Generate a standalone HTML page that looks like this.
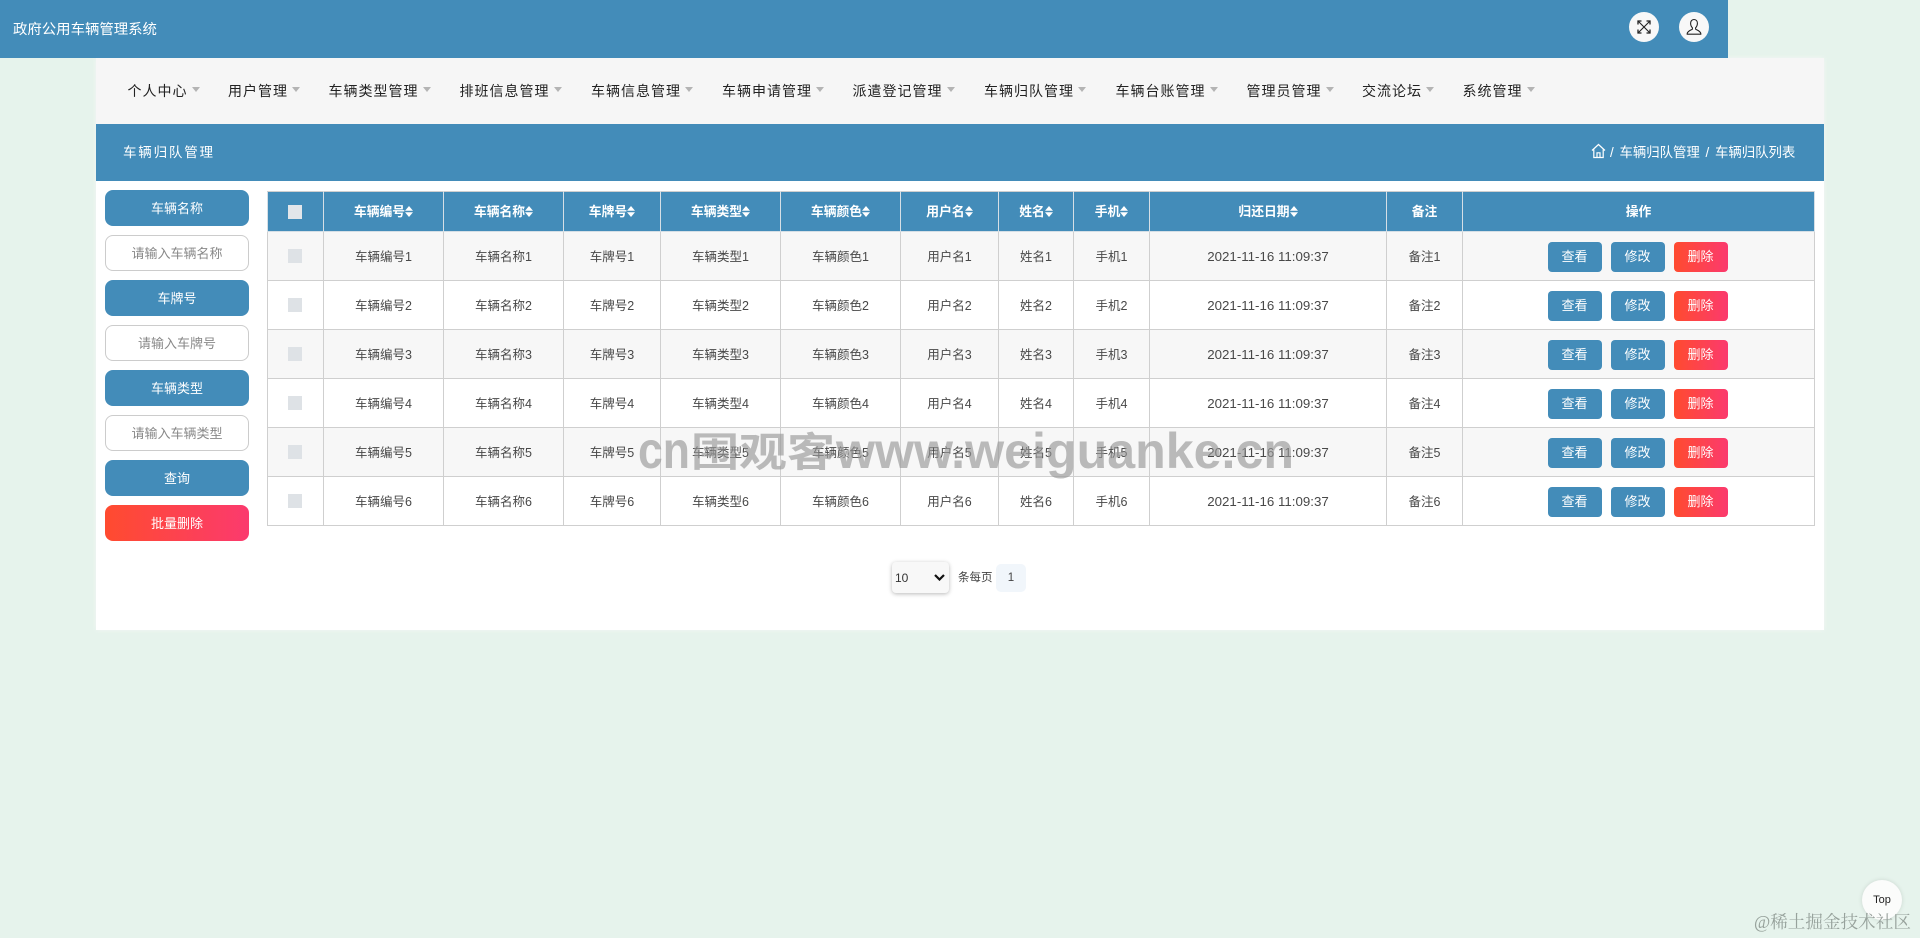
<!DOCTYPE html>
<html lang="zh-CN">
<head>
<meta charset="utf-8">
<title>政府公用车辆管理系统</title>
<style>
*{box-sizing:border-box;margin:0;padding:0}
html,body{width:1920px;height:938px;overflow:hidden}
body{position:relative;background:#e6f3ec;font-family:"Liberation Sans","Noto Sans CJK SC",sans-serif;color:#444}
.abs{position:absolute;white-space:nowrap}
#top{position:absolute;left:0;top:0;width:1728px;height:58px;background:#438cb9;z-index:2}
#top .t{position:absolute;left:13px;top:19px;font-size:14.4px;line-height:22px;color:#fff}
.circ{position:absolute;top:12px;width:30px;height:30px;border-radius:50%;background:#f8f8f8}
.circ svg{position:absolute;left:5px;top:5px}
#panel{position:absolute;left:96px;top:58px;width:1728px;height:572px;background:#fff;box-shadow:0 0 4px #f3f6f4}
#nav{position:absolute;left:0;top:0;width:1728px;height:66px;background:#f6f6f6}
.nv{position:absolute;top:22px;font-size:14px;line-height:22px;letter-spacing:1px;color:#222;white-space:nowrap}
.nv i{position:absolute;top:7px;right:-12px;width:0;height:0;border-left:4.500px solid transparent;border-right:4.500px solid transparent;border-top:5px solid #b4b4b4}
#band{position:absolute;left:0;top:66px;width:1728px;height:57px;background:#438cb9;color:#fff}
#band .h{position:absolute;left:27px;top:18px;font-size:13.5px;line-height:22px;letter-spacing:1.800px}
#band .c{position:absolute;left:1514px;top:18px;font-size:13.4px;line-height:22px;word-spacing:2px;white-space:nowrap}
.sb{position:absolute;left:105px;width:144px;height:36px;border-radius:8px;background:#438cb9;color:#fff;font-size:13px;line-height:37px;text-align:center}
.in{position:absolute;left:105px;width:144px;height:36px;border-radius:8px;background:#fff;border:1px solid #ccc;font-size:13px;text-align:center;font-family:inherit;outline:none}
.in::placeholder{color:#888;opacity:1}
.sb.red{background:linear-gradient(90deg,#ff4b2f,#fb3a6e)}
table{position:absolute;left:267px;top:191px;width:1547px;table-layout:fixed;border-collapse:collapse;font-size:12.5px;z-index:1}
th,td{border:1px solid #cfcfcf;text-align:center;vertical-align:middle;padding:0}
th{height:40px;background:#438cb9;color:#fff;font-weight:700;border-color:#d5dfe6;border-top-color:#cfcfcf;padding-bottom:2px;font-size:12.800px}
td{height:49px;color:#484848;padding-bottom:2px}
td.d,td.o,td.k,th.k{padding-bottom:0}
tbody tr:nth-child(odd) td{background:#f7f7f7}
th svg{vertical-align:-1px;margin-left:0}
.cb{display:block;width:14px;height:14px;margin:0 auto;background:#dee2e6}
th .cb{background:#e3e6ea;position:relative;left:-1px}
td .cb{position:relative;left:-1px}
.d{font-size:13.3px}
.b{display:inline-block;width:54px;height:30px;line-height:29px;border-radius:4px;background:#438cb9;color:#fff;font-size:13px;margin:0 4.5px;vertical-align:middle}
.b.red{background:linear-gradient(90deg,#ff4b2f,#fb3a6e)}
td.o .w{position:relative;left:-1px;white-space:nowrap;display:block;margin-top:2px}
#sel{position:absolute;left:892px;top:562px;width:57px;height:31px;border:none;appearance:none;-webkit-appearance:none;background:#f8f8f8;border-radius:4px;box-shadow:0 1px 4px rgba(0,0,0,.28);font-size:12px;font-family:inherit;color:#333;padding-left:3px}
#pg{position:absolute;left:996px;top:564px;width:30px;height:28px;background:#f1f6fb;border-radius:5px;font-size:11.5px;line-height:28px;text-align:center;color:#444}
#wm{position:absolute;left:0;top:0;width:1920px;height:938px;z-index:5;pointer-events:none}
#topb{position:absolute;left:1862px;top:880px;width:40px;height:40px;border-radius:50%;background:#fbfcfb;box-shadow:0 0 5px rgba(0,0,0,.12);font-size:11px;line-height:40px;text-align:center;color:#222;z-index:3}
#jj{position:absolute;left:1754px;top:909px;font-family:"Liberation Serif","Noto Serif CJK SC",serif;font-size:17.6px;line-height:26px;color:rgba(120,130,125,.72);white-space:nowrap;z-index:4}
</style>
</head>
<body>
<div id="top">
  <div class="t">政府公用车辆管理系统</div>
  <div class="circ" style="left:1629px">
    <svg width="20" height="20" viewBox="0 0 20 20" fill="none" stroke="#222" stroke-width="1.1"><path d="M4 4L16 16M16 4L4 16"/><path d="M4 7.500V4H7.500M12.500 4H16V7.500M16 12.500V16H12.500M7.500 16H4V12.500" stroke-width="1.300"/></svg>
  </div>
  <div class="circ" style="left:1679px">
    <svg width="20" height="20" viewBox="0 0 20 20" fill="none" stroke="#222" stroke-width="1.1"><path d="M10 2.500C7.800 2.500 6.600 4.200 6.600 6.300C6.600 8.400 7.600 10 8.400 10.800V12.200C6.800 13.200 3.800 14 3.200 16.500V17.200H16.800V16.500C16.200 14 13.200 13.200 11.600 12.200V10.800C12.400 10 13.400 8.400 13.400 6.300C13.400 4.200 12.200 2.500 10 2.500Z"/></svg>
  </div>
</div>
<div id="panel">
  <div id="nav">
    <div class="nv" style="left:31.500px">个人中心<i></i></div>
    <div class="nv" style="left:132px">用户管理<i></i></div>
    <div class="nv" style="left:232.500px">车辆类型管理<i></i></div>
    <div class="nv" style="left:363.500px">排班信息管理<i></i></div>
    <div class="nv" style="left:495px">车辆信息管理<i></i></div>
    <div class="nv" style="left:626px">车辆申请管理<i></i></div>
    <div class="nv" style="left:756.500px">派遣登记管理<i></i></div>
    <div class="nv" style="left:888px">车辆归队管理<i></i></div>
    <div class="nv" style="left:1019.500px">车辆台账管理<i></i></div>
    <div class="nv" style="left:1150.500px">管理员管理<i></i></div>
    <div class="nv" style="left:1266px">交流论坛<i></i></div>
    <div class="nv" style="left:1366.500px">系统管理<i></i></div>
  </div>
  <div id="band">
    <div class="h">车辆归队管理</div>
    <svg class="abs" style="left:1495px;top:19px" width="15" height="16" viewBox="0 0 15 16" fill="none" stroke="#fff" stroke-width="1.2"><path d="M1 7.500L7.500 1.500L14 7.500M2.800 6.500V14.500H12.200V6.500M6 14.500V9.800H9V14.500"/></svg>
    <div class="c">/ 车辆归队管理 / 车辆归队列表</div>
  </div>
</div>

<div class="sb" style="top:190px">车辆名称</div>
<input class="in" style="top:235px" placeholder="请输入车辆名称">
<div class="sb" style="top:280px">车牌号</div>
<input class="in" style="top:325px" placeholder="请输入车牌号">
<div class="sb" style="top:370px">车辆类型</div>
<input class="in" style="top:415px" placeholder="请输入车辆类型">
<div class="sb" style="top:460px">查询</div>
<div class="sb red" style="top:505px">批量删除</div>

<table>
<colgroup><col style="width:56px"><col style="width:120px"><col style="width:120px"><col style="width:97px"><col style="width:120px"><col style="width:120px"><col style="width:98px"><col style="width:75px"><col style="width:76px"><col style="width:237px"><col style="width:76px"><col style="width:352px"></colgroup>
<thead><tr>
<th class="k"><span class="cb"></span></th>
<th>车辆编号<svg width="8" height="11" viewBox="0 0 8 11" fill="#fff"><path d="M4 0L8 4.700H0ZM0 6.300H8L4 11Z"/></svg></th>
<th>车辆名称<svg width="8" height="11" viewBox="0 0 8 11" fill="#fff"><path d="M4 0L8 4.700H0ZM0 6.300H8L4 11Z"/></svg></th>
<th>车牌号<svg width="8" height="11" viewBox="0 0 8 11" fill="#fff"><path d="M4 0L8 4.700H0ZM0 6.300H8L4 11Z"/></svg></th>
<th>车辆类型<svg width="8" height="11" viewBox="0 0 8 11" fill="#fff"><path d="M4 0L8 4.700H0ZM0 6.300H8L4 11Z"/></svg></th>
<th>车辆颜色<svg width="8" height="11" viewBox="0 0 8 11" fill="#fff"><path d="M4 0L8 4.700H0ZM0 6.300H8L4 11Z"/></svg></th>
<th>用户名<svg width="8" height="11" viewBox="0 0 8 11" fill="#fff"><path d="M4 0L8 4.700H0ZM0 6.300H8L4 11Z"/></svg></th>
<th>姓名<svg width="8" height="11" viewBox="0 0 8 11" fill="#fff"><path d="M4 0L8 4.700H0ZM0 6.300H8L4 11Z"/></svg></th>
<th>手机<svg width="8" height="11" viewBox="0 0 8 11" fill="#fff"><path d="M4 0L8 4.700H0ZM0 6.300H8L4 11Z"/></svg></th>
<th>归还日期<svg width="8" height="11" viewBox="0 0 8 11" fill="#fff"><path d="M4 0L8 4.700H0ZM0 6.300H8L4 11Z"/></svg></th>
<th>备注</th>
<th>操作</th>
</tr></thead>
<tbody>
<tr><td class="k"><span class="cb"></span></td><td>车辆编号1</td><td>车辆名称1</td><td>车牌号1</td><td>车辆类型1</td><td>车辆颜色1</td><td>用户名1</td><td>姓名1</td><td>手机1</td><td class="d">2021-11-16 11:09:37</td><td>备注1</td><td class="o"><span class="w"><span class="b">查看</span><span class="b">修改</span><span class="b red">删除</span></span></td></tr>
<tr><td class="k"><span class="cb"></span></td><td>车辆编号2</td><td>车辆名称2</td><td>车牌号2</td><td>车辆类型2</td><td>车辆颜色2</td><td>用户名2</td><td>姓名2</td><td>手机2</td><td class="d">2021-11-16 11:09:37</td><td>备注2</td><td class="o"><span class="w"><span class="b">查看</span><span class="b">修改</span><span class="b red">删除</span></span></td></tr>
<tr><td class="k"><span class="cb"></span></td><td>车辆编号3</td><td>车辆名称3</td><td>车牌号3</td><td>车辆类型3</td><td>车辆颜色3</td><td>用户名3</td><td>姓名3</td><td>手机3</td><td class="d">2021-11-16 11:09:37</td><td>备注3</td><td class="o"><span class="w"><span class="b">查看</span><span class="b">修改</span><span class="b red">删除</span></span></td></tr>
<tr><td class="k"><span class="cb"></span></td><td>车辆编号4</td><td>车辆名称4</td><td>车牌号4</td><td>车辆类型4</td><td>车辆颜色4</td><td>用户名4</td><td>姓名4</td><td>手机4</td><td class="d">2021-11-16 11:09:37</td><td>备注4</td><td class="o"><span class="w"><span class="b">查看</span><span class="b">修改</span><span class="b red">删除</span></span></td></tr>
<tr><td class="k"><span class="cb"></span></td><td>车辆编号5</td><td>车辆名称5</td><td>车牌号5</td><td>车辆类型5</td><td>车辆颜色5</td><td>用户名5</td><td>姓名5</td><td>手机5</td><td class="d">2021-11-16 11:09:37</td><td>备注5</td><td class="o"><span class="w"><span class="b">查看</span><span class="b">修改</span><span class="b red">删除</span></span></td></tr>
<tr><td class="k"><span class="cb"></span></td><td>车辆编号6</td><td>车辆名称6</td><td>车牌号6</td><td>车辆类型6</td><td>车辆颜色6</td><td>用户名6</td><td>姓名6</td><td>手机6</td><td class="d">2021-11-16 11:09:37</td><td>备注6</td><td class="o"><span class="w"><span class="b">查看</span><span class="b">修改</span><span class="b red">删除</span></span></td></tr>
</tbody>
</table>

<select id="sel"><option>10</option></select>
<svg class="abs" style="left:934px;top:574px" width="11" height="7" viewBox="0 0 11 7" fill="none" stroke="#111" stroke-width="2.2"><path d="M1 1L5.500 5.500L10 1"/></svg>
<div class="abs" style="left:958px;top:568px;font-size:11.5px;line-height:20px;color:#444">条每页</div>
<div id="pg">1</div>

<svg id="wm" width="1920" height="938" viewBox="0 0 1920 938">
  <g fill="rgba(150,150,150,.64)" font-weight="700">
    <text x="638" y="468" font-size="52" textLength="52" lengthAdjust="spacingAndGlyphs" font-family="Liberation Sans, sans-serif">cn</text>
    <text x="691" y="466" font-size="40" textLength="144" lengthAdjust="spacingAndGlyphs" font-family="Noto Sans CJK SC, sans-serif">围观客</text>
    <text x="836" y="468" font-size="50" textLength="458" lengthAdjust="spacingAndGlyphs" font-family="Liberation Sans, sans-serif">www.weiguanke.cn</text>
  </g>
</svg>

<div id="topb">Top</div>
<div id="jj">@稀土掘金技术社区</div>
</body>
</html>
